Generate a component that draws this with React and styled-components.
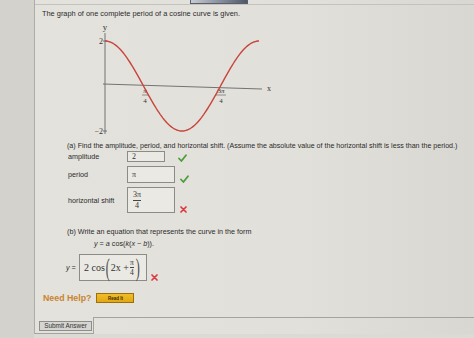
import React from "react";
import styled, { createGlobalStyle } from "styled-components";

const Global = createGlobalStyle`
  html, body { margin: 0; padding: 0; }
  body {
    width: 474px;
    height: 338px;
    overflow: hidden;
    background: #dcdad4;
    font-family: "Liberation Sans", Arial, sans-serif;
    color: #2b2b2b;
  }
`;

const Page = styled.div`
  display: flex;
  width: 474px;
  height: 338px;
`;

const Gutter = styled.div`
  width: 34px;
  background: #d4d2cc;
`;

const Main = styled.div`
  flex: 1;
  height: 334px;
  border-left: 1px solid #aeaca6;
  background: linear-gradient(90deg, #e4e2dd 0%, #e2e0da 60%, #d9d7d1 100%);
  display: flex;
  flex-direction: column;
`;

const TopStrip = styled.div`
  height: 4px;
  border-bottom: 1px solid #c4c2bc;
  display: flex;
`;

const Stub = styled.div`
  margin-left: 155px;
  width: 56px;
  height: 3px;
  background: linear-gradient(90deg, #c9ccd2, #8a91a0 50%, #4f5868);
  border: 1px solid #5a606b;
  border-top: none;
`;

const Text = styled.div`
  font-size: ${p => p.$fs || 7.2}px;
  line-height: 10px;
  white-space: nowrap;
  margin-top: ${p => p.$mt || 0}px;
  padding-left: ${p => p.$pl || 0}px;
`;

const GraphSvg = styled.svg`
  display: block;
  margin: 1px 0 0 55px;
`;

const Section = styled.div`
  padding-left: 32px;
`;

const FormGrid = styled.div`
  display: grid;
  grid-template-columns: 59px auto auto;
  justify-content: start;
  align-items: center;
  row-gap: 4px;
  padding-left: 1px;
`;

const Label = styled.span`
  font-size: 7.2px;
`;

const Field = styled.div`
  width: ${p => p.$w}px;
  height: ${p => p.$h}px;
  box-sizing: border-box;
  border: 1px solid #8d8b86;
  background: #ebe9e4;
  display: flex;
  align-items: center;
  padding-left: 4px;
  font-family: "Liberation Serif", "Times New Roman", serif;
  font-size: ${p => p.$fs || 8}px;
  color: #333;
`;

const Mark = styled.span`
  align-self: end;
  margin-left: ${p => p.$ml || 4}px;
  display: flex;
`;

const Frac = styled.span`
  display: inline-flex;
  flex-direction: column;
  align-items: center;
  font-family: "Liberation Serif", "Times New Roman", serif;
  font-size: ${p => p.$fs || 7}px;
  line-height: 1;
  margin: 0 1px;
`;

const FracBar = styled.span`
  align-self: stretch;
  height: 0;
  border-top: 0.8px solid #444;
  margin: 1px 0;
`;

const Formula = styled.div`
  font-size: 7.2px;
  line-height: 10px;
  margin-top: 2px;
  padding-left: 59px;
  i { font-style: italic; }
`;

const AnswerRow = styled.div`
  display: flex;
  align-items: center;
  margin-top: 5px;
  padding-left: 31px;
`;

const YEq = styled.span`
  font-size: 7.2px;
  width: 13px;
  font-style: italic;
`;

const BigField = styled.div`
  width: 68px;
  height: 27px;
  box-sizing: border-box;
  border: 1px solid #8d8b86;
  background: #ebe9e4;
  display: flex;
  align-items: center;
  padding-left: 4px;
  font-family: "Liberation Serif", "Times New Roman", serif;
  font-size: 10px;
  color: #333;
  white-space: pre;
`;

const Paren = styled.span`
  font-size: 12px;
  line-height: 1;
  transform: scaleY(2.1);
  display: inline-block;
  margin: 0 1px;
  color: #444;
`;

const HelpRow = styled.div`
  display: flex;
  align-items: center;
  margin-top: 12px;
  padding-left: 8px;
`;

const NeedHelp = styled.span`
  color: #c9842f;
  font-weight: bold;
  font-size: 8.8px;
`;

const ReadIt = styled.button`
  margin-left: 5px;
  width: 38px;
  height: 10px;
  padding: 0;
  background: linear-gradient(#f0bd2a, #e2a812);
  border: 1px solid #9c6e0c;
  font-family: "Liberation Sans", Arial, sans-serif;
  font-size: 4.5px;
  font-weight: bold;
  color: #3a2a00;
`;

const Footer = styled.div`
  display: flex;
  align-items: flex-start;
  margin-top: auto;
`;

const SubmitTab = styled.div`
  width: 59px;
  height: 17px;
  border-right: 1px solid #a5a39e;
  border-bottom: 1px solid #a5a39e;
  padding: 4px 0 0 4px;
  box-sizing: border-box;
`;

const FooterRest = styled.div`
  flex: 1;
  border-top: 1px solid #a5a39e;
`;

const SubmitButton = styled.button`
  display: block;
  width: 53px;
  height: 10px;
  padding: 0;
  background: #d6d5d2;
  border: 1px solid #8f8e8a;
  font-family: "Liberation Sans", Arial, sans-serif;
  font-size: 6.4px;
  line-height: 8px;
  color: #333;
`;

const Check = () => (
  <svg width="9" height="8" viewBox="0 0 9 8">
    <path d="M1 4.5 L3.4 7 L8 1.2" fill="none" stroke="#4c9e3c" strokeWidth="1.8" strokeLinecap="round" strokeLinejoin="round" />
  </svg>
);

const Cross = () => (
  <svg width="7" height="7" viewBox="0 0 7 7">
    <path d="M1 1 L6 6 M6 1 L1 6" stroke="#dc3a40" strokeWidth="1.7" strokeLinecap="round" />
  </svg>
);

const Graph = () => {
  const pts = [];
  for (let i = 0; i <= 120; i++) {
    const t = i / 120;
    const x = 15 + 154 * t;
    const y = 66 - 45 * Math.cos(2 * Math.PI * t);
    pts.push(`${x.toFixed(2)},${y.toFixed(2)}`);
  }
  const serif = { fontFamily: "'Liberation Serif', 'Times New Roman', serif", fill: "#333" };
  return (
    <GraphSvg width="185" height="118" viewBox="0 0 185 118">
      <line x1="15" y1="13" x2="15" y2="114" stroke="#666" strokeWidth="0.9" />
      <line x1="13" y1="64" x2="172" y2="69" stroke="#666" strokeWidth="0.9" />
      <line x1="13" y1="21" x2="17" y2="21" stroke="#666" strokeWidth="0.9" />
      <line x1="13" y1="111" x2="17" y2="111" stroke="#666" strokeWidth="0.9" />
      <text x="15" y="10" fontSize="9" textAnchor="middle" style={serif}>y</text>
      <text x="13" y="24" fontSize="8" textAnchor="end" style={serif}>2</text>
      <text x="13" y="114" fontSize="8" textAnchor="end" style={serif}>−2</text>
      <text x="177" y="71" fontSize="8" style={serif}>x</text>
      <text x="55" y="73" fontSize="7" textAnchor="middle" style={{ ...serif, fontStyle: "italic" }}>π</text>
      <line x1="52" y1="75" x2="58" y2="75" stroke="#555" strokeWidth="0.6" />
      <text x="55" y="82.5" fontSize="7" textAnchor="middle" style={serif}>4</text>
      <text x="131" y="73" fontSize="7" textAnchor="middle" style={serif}>3<tspan fontStyle="italic">π</tspan></text>
      <line x1="126" y1="75" x2="136" y2="75" stroke="#555" strokeWidth="0.6" />
      <text x="131" y="82.5" fontSize="7" textAnchor="middle" style={serif}>4</text>
      <polyline points={pts.join(" ")} fill="none" stroke="#c8453c" strokeWidth="1.4" />
    </GraphSvg>
  );
};

export default function App() {
  return (
    <>
      <Global />
      <Page>
        <Gutter />
        <Main>
          <TopStrip>
            <Stub />
          </TopStrip>
          <Text $mt={4} $pl={7} $fs={7.4}>The graph of one complete period of a cosine curve is given.</Text>
          <Graph />
          <Section>
            <Text $mt={3} $fs={7.1}>
              (a) Find the amplitude, period, and horizontal shift. (Assume the absolute value of the horizontal shift is less than the period.)
            </Text>
            <FormGrid>
              <Label>amplitude</Label>
              <Field $w={38} $h={11}>2</Field>
              <Mark $ml={3}><Check /></Mark>

              <Label>period</Label>
              <Field $w={48} $h={17}>π</Field>
              <Mark $ml={5}><Check /></Mark>

              <Label>horizontal shift</Label>
              <Field $w={48} $h={26}>
                <Frac $fs={8}>
                  <span>3π</span>
                  <FracBar />
                  <span>4</span>
                </Frac>
              </Field>
              <Mark $ml={5}><Cross /></Mark>
            </FormGrid>
            <Text $mt={14}>(b) Write an equation that represents the curve in the form</Text>
          </Section>
          <Formula>
            <i>y</i> = <i>a</i> cos(<i>k</i>(<i>x</i> − <i>b</i>)).
          </Formula>
          <AnswerRow>
            <YEq>y =</YEq>
            <BigField>
              2 cos<Paren>(</Paren>2x + 
              <Frac $fs={7.5}>
                <span>π</span>
                <FracBar />
                <span>4</span>
              </Frac>
              <Paren>)</Paren>
            </BigField>
            <Mark $ml={4}><Cross /></Mark>
          </AnswerRow>
          <HelpRow>
            <NeedHelp>Need Help?</NeedHelp>
            <ReadIt>Read It</ReadIt>
          </HelpRow>
          <Footer>
            <SubmitTab>
              <SubmitButton>Submit Answer</SubmitButton>
            </SubmitTab>
            <FooterRest />
          </Footer>
        </Main>
      </Page>
    </>
  );
}
